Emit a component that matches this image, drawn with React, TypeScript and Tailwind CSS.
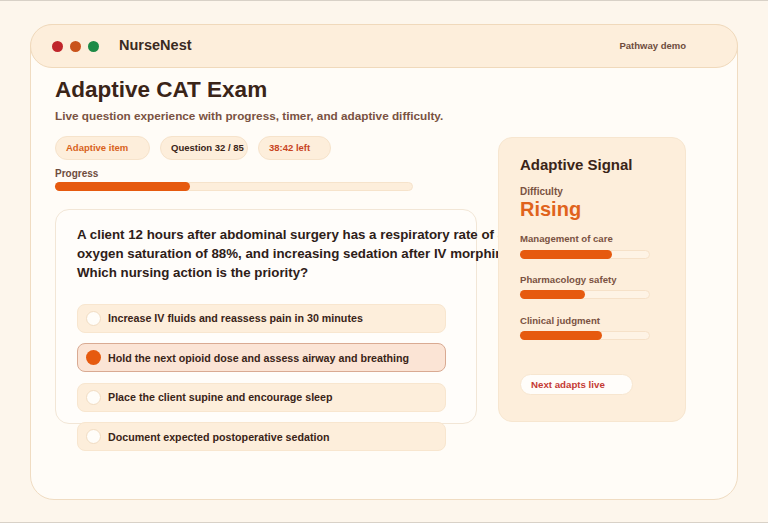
const options = [
  'Increase IV fluids and reassess pain in 30 minutes',
  'Hold the next opioid dose and assess airway and breathing',
  'Place the client supine and encourage sleep',
  'Document expected postoperative sedation',
];

const signals = [
  { label: 'Management of care', value: 72 },
  { label: 'Pharmacology safety', value: 51 },
  { label: 'Clinical judgment', value: 64 },
];

function Chip({ children, className }: { children: React.ReactNode; className: string }) {
  return (
    <span
      className={`flex h-[24px] items-center whitespace-nowrap rounded-full border border-[#f6e3cb] bg-[#fdeedb] pl-[10px] text-[9.5px] font-bold ${className}`}
    >
      {children}
    </span>
  );
}

export default function App() {
  const selected = 1;

  return (
    <div className="h-[523px] w-[768px] overflow-hidden border-y border-[#d8d1c7] bg-[#fdf6ec] pt-[23px] font-['Liberation_Sans',Arial,sans-serif]">
      <div className="ml-[30px] h-[476px] w-[708px] rounded-[24px] border border-[#f0dcc2] bg-[#fffcf7]">
        {/* window bar */}
        <div className="-mx-px -mt-px flex h-[44px] items-center justify-between rounded-[22px] border border-[#f0d9bb] bg-[#fdeedb] pl-[21px] pr-[51px]">
          <div className="flex items-center">
            <span className="h-[11px] w-[11px] rounded-full bg-[#c0262c]" />
            <span className="ml-[7px] h-[11px] w-[11px] rounded-full bg-[#c9531b]" />
            <span className="ml-[7px] h-[11px] w-[11px] rounded-full bg-[#1d8a46]" />
            <span className="ml-[20px] text-[14.5px] font-bold text-[#3a2a22]">NurseNest</span>
          </div>
          <span className="text-[9.5px] font-bold text-[#6e4c3d]">Pathway demo</span>
        </div>

        <div className="pl-[24px]">
          <h1 className="mt-[7px] text-[22.5px] font-bold leading-[30px] text-[#3a2418]">Adaptive CAT Exam</h1>
          <p className="mt-[2px] text-[11.75px] font-bold text-[#7a5242]">
            Live question experience with progress, timer, and adaptive difficulty.
          </p>

          <div className="mt-[11px] flex gap-[21px]">
            <div className="w-[422px]">
              <div className="flex gap-[10px]">
                <Chip className="w-[95px] text-[#d8621b]">Adaptive item</Chip>
                <Chip className="w-[88px] text-[#3a2418]">Question 32 / 85</Chip>
                <Chip className="w-[73px] text-[#c8441f]">38:42 left</Chip>
              </div>
              <div className="mt-[6px] text-[10px] font-bold text-[#6e4c3d]">Progress</div>
              <div className="mt-[1px] h-[9px] w-[358px] rounded-full border border-[#f6e3cb] bg-[#fdeedb]">
                <div className="-m-px h-[9px] rounded-full bg-[#e65a0f]" style={{ width: '38%' }} />
              </div>

              {/* question card; the stem runs under the side panel */}
              <div className="mt-[18px] h-[215px] rounded-[14px] border border-[#f2e6d6] bg-[#fffdfa] px-[21px] pt-[15px]">
                <p className="w-[472px] text-[13.3px] font-bold leading-[19px] text-[#2e2018]">
                  A client 12 hours after abdominal surgery has a respiratory rate of 8, oxygen saturation of 88%, and
                  increasing sedation after IV morphine. Which nursing action is the priority?
                </p>
                <div className="mt-[22px] flex w-[369px] flex-col gap-[10.5px]">
                  {options.map((text, i) => (
                    <div
                      key={text}
                      className={
                        i === selected
                          ? 'flex h-[29px] items-center rounded-[8px] border border-[#d9aa92] bg-[#fbe4d5] pl-[8px]'
                          : 'flex h-[29px] items-center rounded-[8px] border border-[#f8e6cf] bg-[#fdeedb] pl-[8px]'
                      }
                    >
                      <span
                        className={
                          i === selected
                            ? 'h-[15px] w-[15px] rounded-full bg-[#e65a0f]'
                            : 'h-[15px] w-[15px] rounded-full border border-[#f1dcc2] bg-[#fffdf9]'
                        }
                      />
                      <span className="ml-[7px] text-[10.7px] font-bold text-[#3a2418]">{text}</span>
                    </div>
                  ))}
                </div>
              </div>
            </div>

            {/* adaptive signal panel */}
            <aside className="relative z-10 mt-px h-[285px] w-[188px] rounded-[14px] border border-[#f7e6d0] bg-[#fdeedb] px-[21px] pt-[16px]">
              <h2 className="text-[15px] font-bold text-[#3a2418]">Adaptive Signal</h2>
              <div className="mt-[8px] text-[10px] font-bold text-[#7a5242]">Difficulty</div>
              <div className="text-[20px] font-bold leading-[20px] text-[#e0631c]">Rising</div>
              <div className="mt-[13px] flex flex-col gap-[14.5px]">
                {signals.map((s) => (
                  <div key={s.label}>
                    <div className="text-[9.6px] font-bold text-[#7a5242]">{s.label}</div>
                    <div className="mt-[3px] h-[9px] w-[130px] rounded-full border border-[#f6e1c8] bg-[#fef3e5]">
                      <div className="-m-px h-[9px] rounded-full bg-[#e65a0f]" style={{ width: `${s.value}%` }} />
                    </div>
                  </div>
                ))}
              </div>
              <div className="mt-[34px] flex h-[21px] w-[113px] items-center rounded-full border border-[#f7e6d0] bg-[#fffdfa] pl-[10px] text-[9.7px] font-bold text-[#c53a34]">
                Next adapts live
              </div>
            </aside>
          </div>
        </div>
      </div>
    </div>
  );
}
